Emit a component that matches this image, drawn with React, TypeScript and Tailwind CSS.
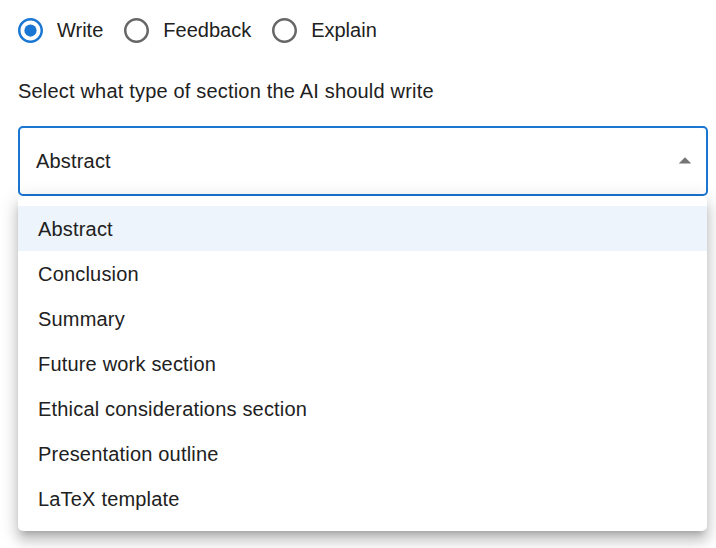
import React from "react";

function RadioIcon({ checked }: { checked: boolean }) {
  const color = checked ? "#1976d2" : "#666666";
  return (
    <svg width="25" height="25" viewBox="2 2 20 20" className="shrink-0">
      <path
        fill={color}
        d="M12 2C6.48 2 2 6.48 2 12s4.48 10 10 10 10-4.48 10-10S17.52 2 12 2zm0 18c-4.42 0-8-3.58-8-8s3.58-8 8-8 8 3.58 8 8-3.58 8-8 8z"
      />
      {checked && <circle cx="12" cy="12" r="4.9" fill={color} />}
    </svg>
  );
}

const items = [
  "Abstract",
  "Conclusion",
  "Summary",
  "Future work section",
  "Ethical considerations section",
  "Presentation outline",
  "LaTeX template",
];

export default function App() {
  const radios = [
    { label: "Write", checked: true },
    { label: "Feedback", checked: false },
    { label: "Explain", checked: false },
  ];
  return (
    <div
      className="w-[716px] h-[548px] bg-white text-[20px] text-[#212121] tracking-[0.00938em] overflow-hidden"
      style={{ fontFamily: '"Liberation Sans", Arial, sans-serif' }}
    >
      <div className="pl-[18px] pr-[8px]">
        <div className="h-[60px] flex items-center">
          {radios.map((r) => (
            <label key={r.label} className="flex items-center mr-[21px]">
              <RadioIcon checked={r.checked} />
              <span className="ml-[14px] leading-[23px] tracking-normal">{r.label}</span>
            </label>
          ))}
        </div>
        <div className="mt-[20px] leading-[23px]">
          Select what type of section the AI should write
        </div>
        <div className="relative mt-[23px] w-[690px]">
          <div className="h-[70px] border-2 border-[#1976d2] rounded-[5px] flex items-center justify-between pl-[16px] pr-[6px]">
            <span className="leading-[23px]">Abstract</span>
            <svg width="30" height="30" viewBox="0 0 24 24">
              <path fill="#757575" d="M7 14l5-5 5 5z" />
            </svg>
          </div>
          <div className="absolute top-[70px] left-0 w-[689px] bg-white rounded-[5px] py-[10px] shadow-[0px_6px_6px_-4px_rgba(0,0,0,0.2),0px_10px_12px_1px_rgba(0,0,0,0.14),0px_4px_18px_3px_rgba(0,0,0,0.12)]">
            {items.map((it, i) => (
              <div
                key={it}
                className={
                  "h-[45px] flex items-center pl-[20px] pt-[1px] leading-[23px] " +
                  (i === 0 ? "bg-[#edf4fb]" : "")
                }
              >
                {it}
              </div>
            ))}
          </div>
        </div>
      </div>
    </div>
  );
}
